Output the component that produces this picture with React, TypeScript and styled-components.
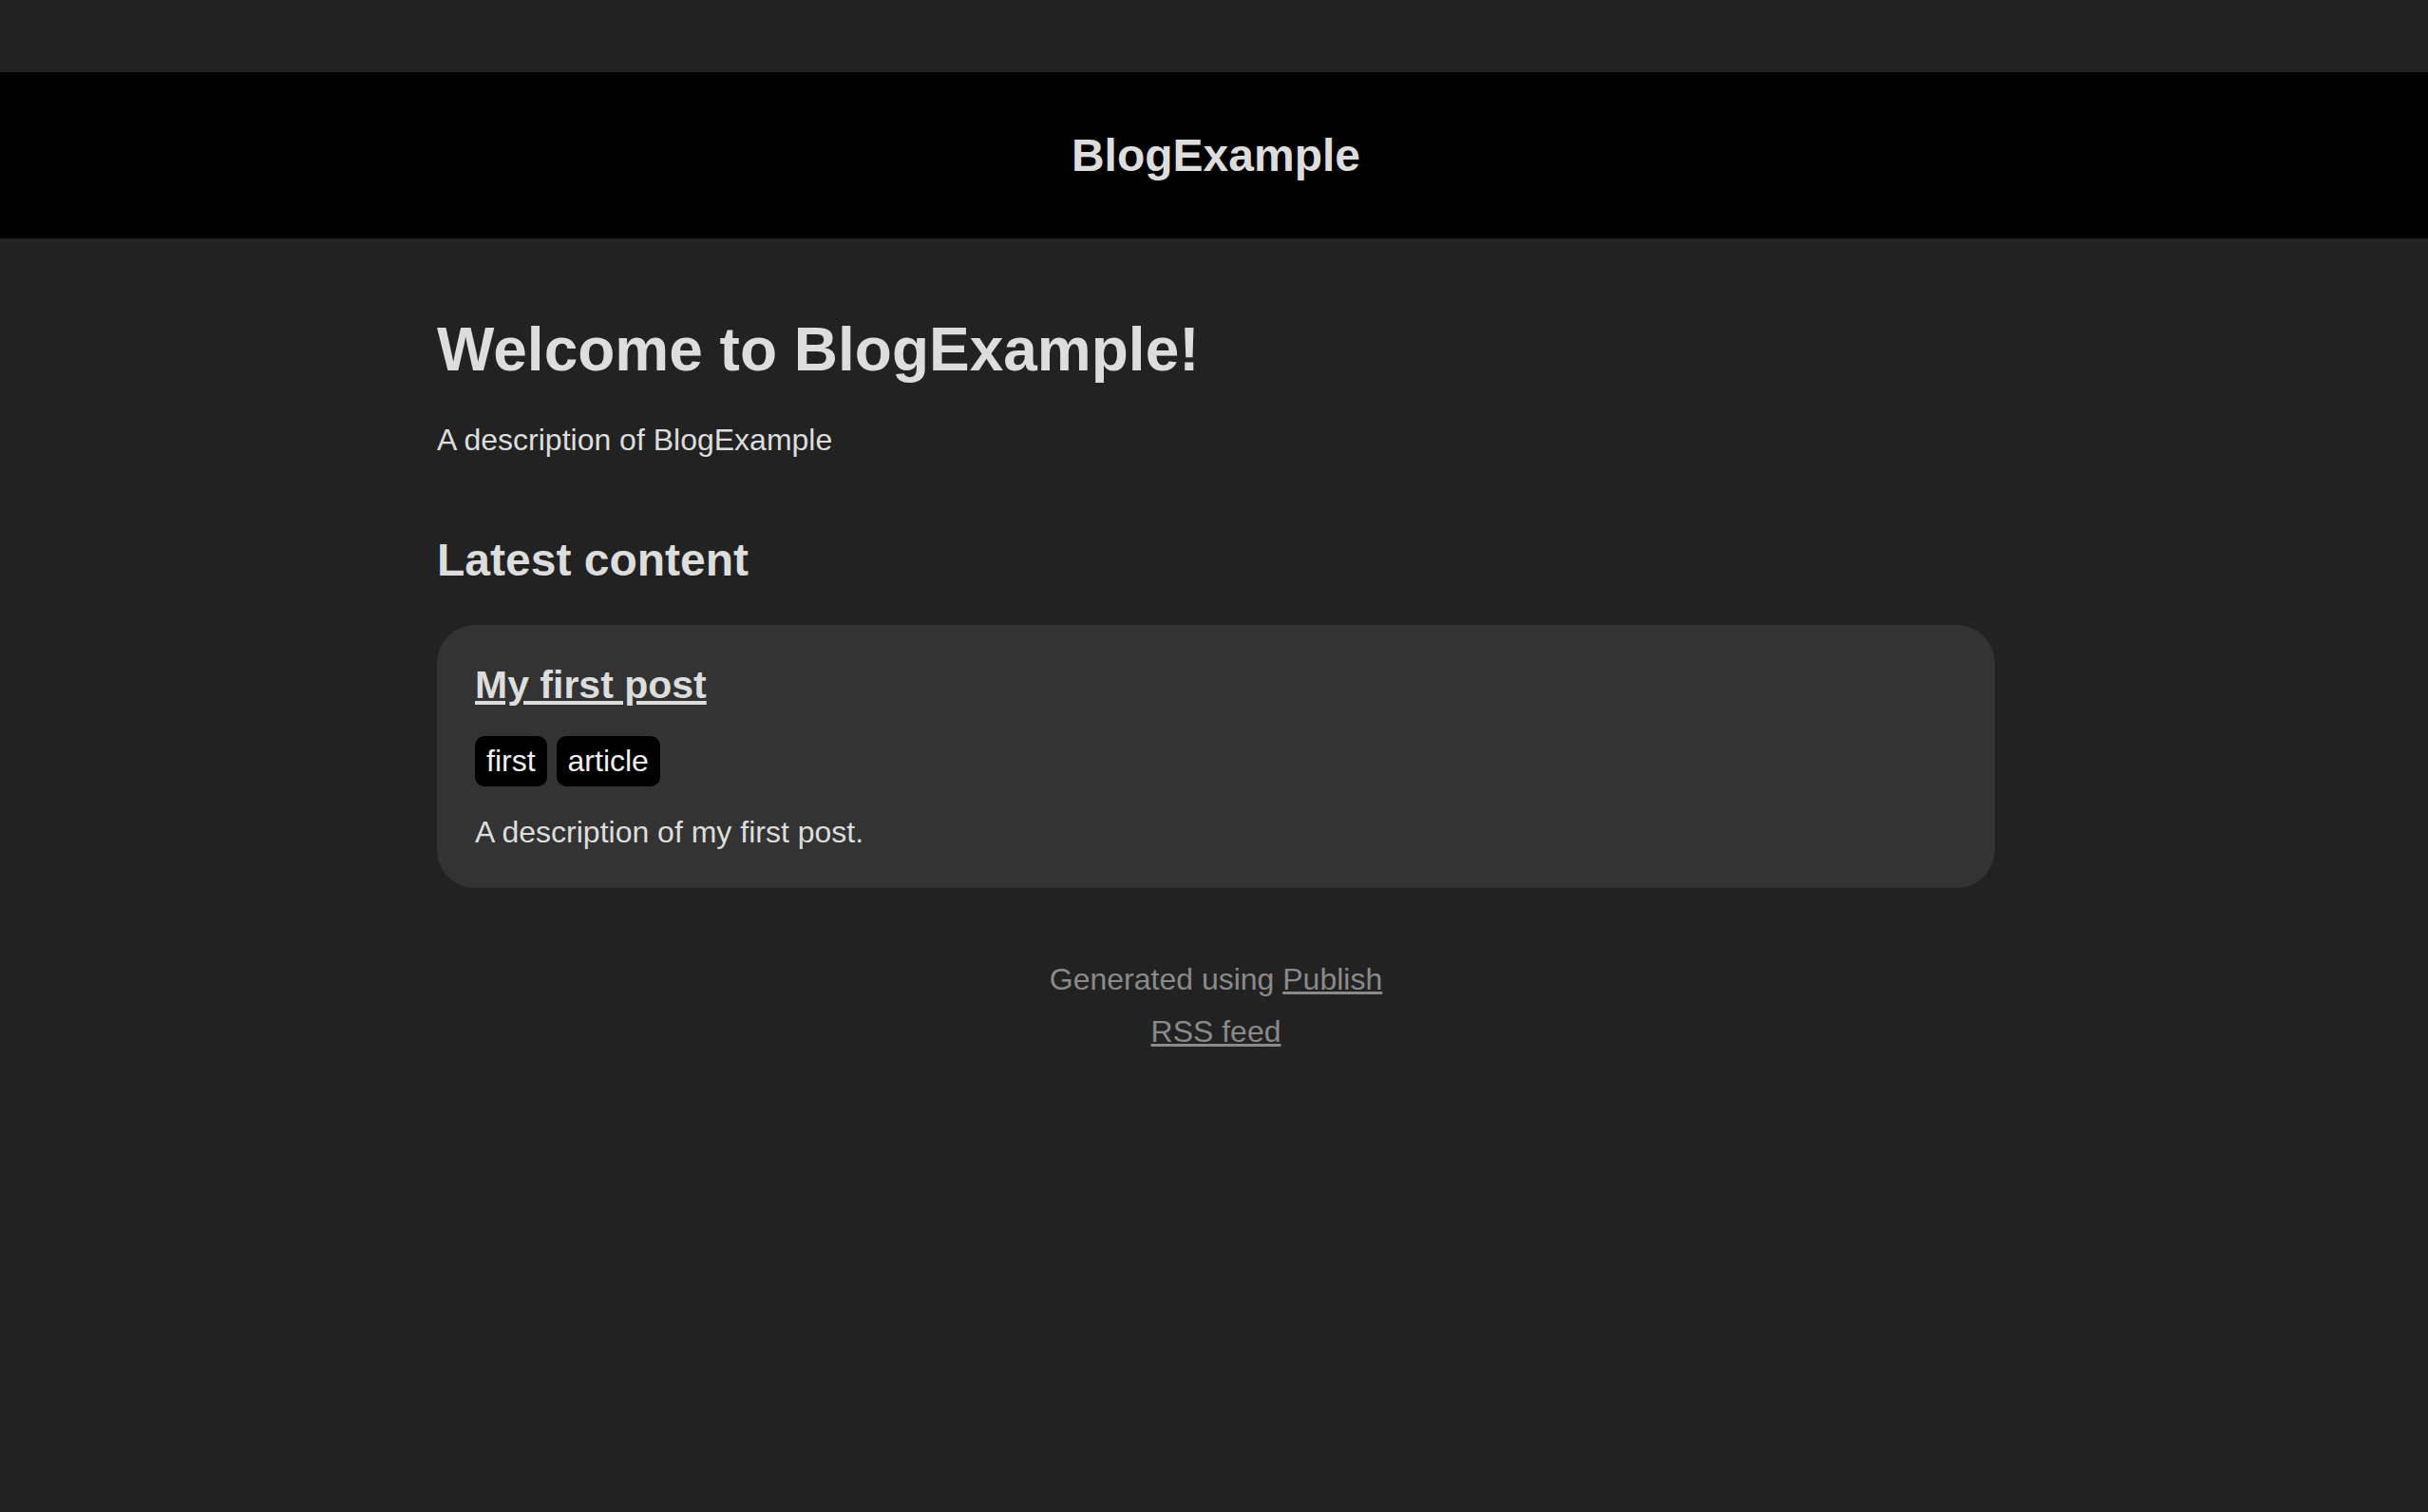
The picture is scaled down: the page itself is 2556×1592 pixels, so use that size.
import React from "react";
import styled, { createGlobalStyle } from "styled-components";

const GlobalStyle = createGlobalStyle`
  *, *::before, *::after {
    margin: 0;
    padding: 0;
    box-sizing: border-box;
  }
  html, body {
    background: #222222;
    color: #dddddd;
    font-family: "Liberation Sans", Arial, Helvetica, sans-serif;
    font-size: 32px;
  }
  body {
    text-align: center;
  }
`;

const Page = styled.div`
  padding-top: 76px;
`;

const Header = styled.header`
  background-color: #000000;
`;

const Wrapper = styled.div<{ $compactY?: boolean }>`
  max-width: 1804px;
  margin-left: auto;
  margin-right: auto;
  padding: ${(p) => (p.$compactY ? "60px 80px 60px 84px" : "80px 80px 78px 84px")};
  text-align: ${(p) => (p.$compactY ? "center" : "left")};
`;

const SiteName = styled.a`
  font-size: 48px;
  font-weight: bold;
  color: #dddddd;
  text-decoration: none;
`;

const PageTitle = styled.h1`
  font-size: 64px;
  font-weight: bold;
  margin-bottom: 40px;
`;

const Description = styled.p`
  margin-bottom: 80px;
`;

const SectionTitle = styled.h2`
  font-size: 48px;
  font-weight: bold;
  margin: 41px 0 41px;
`;

const ItemList = styled.ul`
  list-style: none;
`;

const Item = styled.li`
  display: block;
  padding: 40px;
  border-radius: 40px;
  background-color: #333333;
  margin-bottom: 0;
`;

const ItemTitle = styled.h1`
  font-size: 41px;
  font-weight: bold;
  margin-bottom: 30px;

  a {
    color: inherit;
    text-decoration: underline;
  }
`;

const TagList = styled.ul`
  list-style: none;
  display: flex;
  gap: 10px;
  margin-bottom: 30px;
`;

const Tag = styled.li`
  display: inline-block;
  background-color: #000000;
  color: #eeeeee;
  padding: 8px 12px;
  border-radius: 10px;

  a {
    color: inherit;
    text-decoration: none;
  }
`;

const ItemDescription = styled.p`
  margin: 0;
`;

const Footer = styled.footer`
  color: #8a8a8a;
  text-align: center;
  padding-left: 4px;

  p {
    margin-bottom: 18px;
  }

  a {
    color: inherit;
    text-decoration: underline;
  }
`;

const posts = [
  {
    title: "My first post",
    tags: ["first", "article"],
    description: "A description of my first post.",
  },
];

export default function App() {
  return (
    <>
      <GlobalStyle />
      <Page>
        <Header>
          <Wrapper $compactY>
            <SiteName href="#">BlogExample</SiteName>
          </Wrapper>
        </Header>
        <Wrapper>
          <PageTitle>Welcome to BlogExample!</PageTitle>
          <Description>A description of BlogExample</Description>
          <SectionTitle>Latest content</SectionTitle>
          <ItemList>
            {posts.map((post) => (
              <Item key={post.title}>
                <article>
                  <ItemTitle>
                    <a href="#">{post.title}</a>
                  </ItemTitle>
                  <TagList>
                    {post.tags.map((t) => (
                      <Tag key={t}>
                        <a href="#">{t}</a>
                      </Tag>
                    ))}
                  </TagList>
                  <ItemDescription>{post.description}</ItemDescription>
                </article>
              </Item>
            ))}
          </ItemList>
        </Wrapper>
        <Footer>
          <p>
            Generated using <a href="#">Publish</a>
          </p>
          <p>
            <a href="#">RSS feed</a>
          </p>
        </Footer>
      </Page>
    </>
  );
}
